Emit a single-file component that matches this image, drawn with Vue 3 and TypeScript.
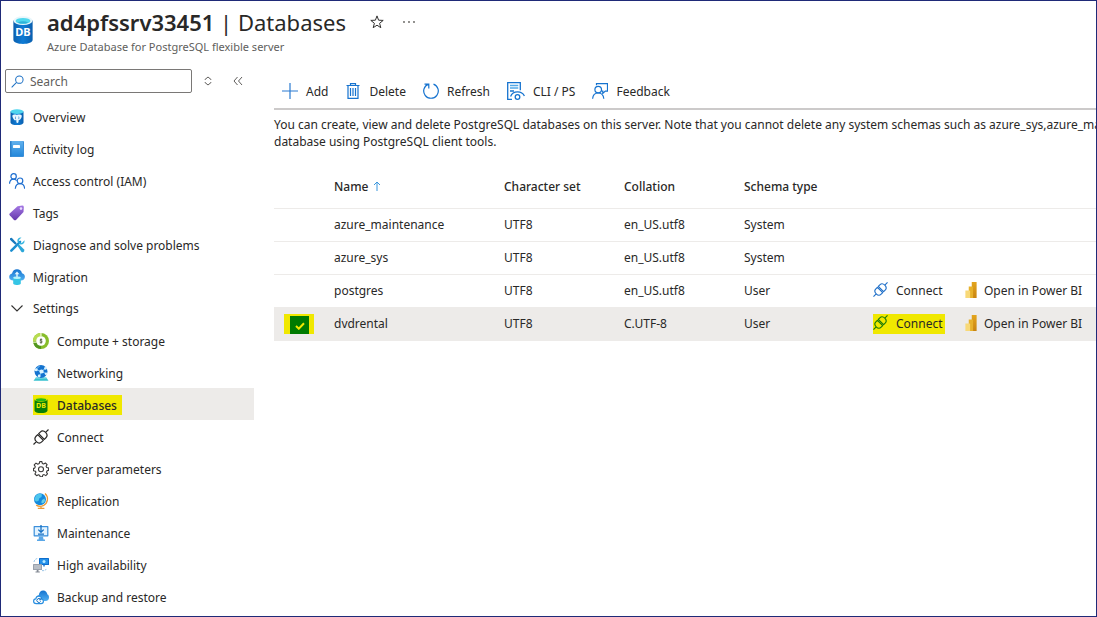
<script setup lang="ts">
import { ref } from 'vue'

interface NavItem {
  label: string
  icon: string
}

interface DatabaseRow {
  name: string
  charset: string
  collation: string
  schema: string
}

const icons: Record<string, string> = {
  database: `
    <path d="M1 2.4v11.2C1 15 4.1 16 8 16s7-1 7-2.400V2.400z" fill="url(#g-db)"/>
    <ellipse cx="8" cy="2.600" rx="7" ry="2.500" fill="#e8f6fb"/>
    <ellipse cx="8" cy="2.800" rx="5.400" ry="1.700" fill="#50d8ee"/>
    <path d="M4 3.800q4-1.600 8 0-4 1-8 0z" fill="#2fb2d8"/>`,
  postgres: `
    <path d="M1.500 2.600v10.800C1.500 15 4.500 16 8 16s6.500-1 6.500-2.600V2.600z" fill="url(#g-db)"/>
    <ellipse cx="8" cy="2.600" rx="6.500" ry="2.300" fill="#4fd5ee"/>
    <path d="M3.400 6.500c1-1.200 3-1 4.500-.600 1.600-.600 4.200-.600 4.800.700.4 1.400-.6 3.300-1.700 4.200l-1.300.2c-.2 1.600 0 3-1.300 3-1.200-.1-1-1.600-1.100-3-.600.4-1.500.5-2 0-.900-1-2.300-3.200-1.900-4.500z" fill="#e9f7ff"/>
    <path d="M6.600 7.600c-.3 1-.2 1.600 0 2.600M9.700 7.500c.4 1 .2 1.700 0 2.600" stroke="#1671c2" stroke-width=".6" fill="none"/>`,
  log: `
    <rect x="1" y="0" width="14" height="16" rx="1" fill="#3a8fd8"/>
    <rect x="2" y="0" width="12" height="15" rx=".8" fill="url(#g-log)"/>
    <rect x="1" y="0" width="1.500" height="16" rx=".7" fill="#2a7fca"/>
    <rect x="4" y="4" width="7" height="3" rx=".4" fill="#fff"/>`,
  people: `
    <g fill="none" stroke="#1f6fd0" stroke-width="1.200"><circle cx="4.600" cy="3.400" r="2.700"/><path d="M.5 10.800c.2-3 1.900-4.600 4.100-4.600 1.300 0 2.300.5 3 1.400"/><circle cx="11" cy="7.800" r="2.800"/><path d="M6.300 15.700c.3-3.200 2.200-5 4.700-5s4.400 1.800 4.700 5"/></g>`,
  tag: `
    <path d="M8.500 1.300 13.300.6q1.400 0 1.500 1.300l-.3 5.100-7.500 7.900q-1 .9-2 0L.7 10.300q-.8-1 0-1.900z" fill="url(#g-tag)"/>
    <circle cx="12" cy="3.600" r="1.300" fill="#e9dcff"/>`,
  tools: `
    <path d="m2.300 13.700 8.800-8.900" stroke="#1b8ed0" stroke-width="2.500" stroke-linecap="round"/>
    <path d="M15.500 3.300 12.800 6 10.200 5.600 9.900 3.100 12.500.5C9.900-.1 7.900 2 8.400 4.600l2.900 2.900c2.700.4 4.700-1.600 4.200-4.200z" fill="#38b6e0"/>
    <path d="M1 1.200 2.700.7l5.100 5.600-1.500 1.500L1 2.800z" fill="#1879bd"/>
    <path d="m8.300 8.500 1.500-1.300 5.100 5.100q1 1.500-.1 2.500t-2.500 0z" fill="#2ba6d8"/>`,
  migrate: `
    <path d="M4.300 11.500C1.800 11.500.2 10 .2 7.900c0-1.800 1.100-3.100 2.800-3.500C3.500 1.900 5.500.3 8 .3s4.500 1.500 5 3.900c1.800.3 2.900 1.700 2.900 3.500 0 2.100-1.600 3.800-3.900 3.800z" fill="url(#g-cloud)"/>
    <path d="M7.300 8V5.300H5.600L8 2.600l2.400 2.700H8.700V8z" fill="#e8f8ff"/>
    <path d="M4.200 8.700v5.900c0 1.900 7.600 1.900 7.600 0V8.700z" fill="#35c5e5"/><ellipse cx="8" cy="8.700" rx="3.800" ry="1.200" fill="#b8f3fb"/>`,
  compute: `
    <circle cx="8" cy="8" r="8" fill="#87bd2a"/><path d="M8 0a8 8 0 0 0-8 8h3.500A4.500 4.500 0 0 1 8 3.500z" fill="#b8dc50"/><path d="M.5 10A8 8 0 0 0 8 16v-3.400A4.600 4.600 0 0 1 3.700 10z" fill="#539620"/>
    <circle cx="8" cy="8" r="4.800" fill="#fff"/><path d="M9.300 6.800C8.700 6.100 7 6.200 7 7.100s2.200.7 2.200 1.800-1.700 1.100-2.500.3M8 5.500v5" stroke="#4d5c37" stroke-width=".9" fill="none"/><path d="M7.500 0h1v3.300h-1zM.1 8.700h3.300v.9H.2z" fill="#fff"/>`,
  network: `
    <path d="m.5 15.800 2.600-3.500h10l2.400 3.500z" fill="#36c1cf"/><path d="M3 12.300h10l.8 1.200H2.200z" fill="#91e2e7"/>
    <circle cx="8" cy="6.500" r="6.500" fill="#1473cf"/>
    <path d="M3 4.500 8.500 6.500 13 3M8.500 6.500 6 12M8.500 6.500l4.900 2.300M3 4.500 6.500 1" stroke="#83caff" stroke-width="1" fill="none"/>
    <g fill="#d9f2ff"><circle cx="8.500" cy="6.500" r="2.100"/><circle cx="3.200" cy="4.700" r="1.500"/><circle cx="12.500" cy="3.300" r="1.400"/><circle cx="6.200" cy="11" r="1.400"/><circle cx="13" cy="8.800" r="1.200"/></g>`,
  greenDb: `
    <path d="M1.500 2.600v10.800C1.500 15 4.500 16 8 16s6.500-1 6.500-2.600V2.600z" fill="#087e08"/>
    <ellipse cx="8" cy="2.500" rx="6.500" ry="2.200" fill="#dfe500"/><ellipse cx="8" cy="2.700" rx="5.200" ry="1.500" fill="#26b815"/>`,
  plug: `
    <g fill="none" stroke="currentColor" stroke-width="1.200" stroke-linejoin="round" transform="rotate(45 8 8)"><path d="M4 7.300V5Q4 1.500 8 1.500T12 5v2.300zM4 8.700V11q0 3.500 4 3.500t4-3.500V8.700zM8 1.500V-2.600M8 14.500v4.100"/></g>`,
  gear: `
    <g fill="none" stroke="#3b3a39" stroke-width="1.100" stroke-linejoin="round"><path d="m6.700.6-.5 2-1.400.6L3 2.100 1.200 3.900l1.100 1.800-.6 1.400-1.200.3v2.300l2 .5.4 1.100-1 1.700 1.700 1.700 1.800-1 1.200.5.5 1.500h2.300l.4-1.600 1.300-.5 1.700 1 1.700-1.700-1-1.700.6-1.400 1.400-.4V6.900L13.700 6.500l-.6-1.200 1-1.700-1.700-1.600-1.800 1-1.300-.5L8.900.6z"/><circle cx="8" cy="8.200" r="2.500"/></g>`,
  globe: `
    <circle cx="7" cy="6.300" r="6" fill="#168adc"/><path d="M3 2.500Q5.500-.2 9 1.500L8.500 4 6.300 5.200 5.500 8 3 8.500 1.200 6.500z" fill="#4dc5ed"/><path d="m9 7 2.500-1.500L12 8l-2 2.500-1.800-1z" fill="#65d0e9"/>
    <path d="M12 .6c4 3.600 2.900 9.400-1.300 11.800-2.600 1.400-5.400 1.100-7.500-.3M8 13.300V15M4.800 15.300h6.600" stroke="#ed9b36" stroke-width="1.300" fill="none"/>`,
  monitor: `
    <rect x=".6" y="1" width="14.800" height="10.500" rx=".7" fill="#3b8fdb"/><rect x="1.800" y="2.200" width="12.400" height="8" fill="#e2f3ff"/>
    <path d="M8 0v7M5.300 4.600 8 7.300l2.700-2.700M5 9.100h6" stroke="#1670c4" stroke-width="1.300" fill="none"/><path d="M6 11.500h4l.5 3h1.500V16H4v-1.500h1.500z" fill="#5aa7e7"/>`,
  availability: `
    <rect x="6" y="1" width="10" height="7" rx=".5" fill="#0d6dcc"/><rect x="7" y="2" width="8" height="5" fill="#2590e9"/><circle cx="11" cy="4.500" r="1.500" fill="#b4e8ff"/><path d="M10 8h2v1.600h-2z" fill="#579fe0"/>
    <rect x="0" y="7" width="9" height="6" rx=".5" fill="#9aa1ac"/><rect x="1" y="8" width="7" height="4" fill="#b8bec6"/><path d="M3.700 13h1.800v1.500h1.300v1H2.500v-1h1.200z" fill="#858b95"/><path d="M1 5Q1.500 2 4.500 1.500M9 13.600q4 .4 4.800-2.600" stroke="#7fb5df" stroke-width=".8" stroke-dasharray="2 1" fill="none"/>`,
  backup: `
    <path d="M6 12c-1.800 0-2.800-1-2.800-2.700S4.500 6.500 5.800 6.200C6.100 3.600 7.800 1.500 10.200 1.500s3.900 1.700 4.200 4.100C15.500 5.900 16 7 16 8.500c0 2-1.300 3.500-3.300 3.500z" fill="url(#g-cloud)"/>
    <path d="M3.300 14.600C1.500 14.600.6 13.500.6 12.200s1-2.300 2.200-2.400C3.200 8 4.500 7 6.300 7.200c1.600.3 2.500 1.500 2.500 2.900 1.100.3 1.600 1.100 1.600 2.100 0 1.300-.9 2.400-2.300 2.400z" fill="#fff" stroke="#2a8fe0" stroke-width="1.200"/><path d="M7.700 12.400a2 2 0 1 1-.1-2M7.900 8.900v1.900H6.100" stroke="#1471c5" stroke-width="1" fill="none"/>`,
  add: `<path d="M8 0v16M0 8h16" stroke="#2a7bd1" stroke-width="1.200"/>`,
  trash: `
    <g fill="none" stroke="#1673cf" stroke-width="1.200"><path d="M1.500 2.500h13M5.500 2.500V.7h5v1.800M3 2.500v12.800h10V2.500M5.500 5v8M8 5v8M10.500 5v8"/></g>`,
  refresh: `<path d="M10.500 1.100A7.300 7.300 0 1 1 5.500 1.100M1.500 1.200h4.300v4.200" fill="none" stroke="#1673cf" stroke-width="1.200"/>`,
  cli: `
    <g fill="none" stroke="#1673cf" stroke-width="1.300"><path d="M5 17.300H.7V.7h12.600v7.600"/><path d="M3 3.500h8.300M3 6h8.300" stroke="#54a9e8" stroke-width="1.500"/><path d="M3 9h4M3.600 14.400c2.400-6 11.200-6 13.800-.4"/><circle cx="10.500" cy="15" r="2.300"/></g>`,
  feedback: `
    <g fill="none" stroke="#1673cf" stroke-width="1.200"><circle cx="6.200" cy="6.600" r="3.300"/><path d="M.6 15.800c.3-3.500 2.700-5.800 5.600-5.800s5.300 2.300 5.600 5.800M4.500 2.300V.6h11v7.500h-2.200l-2.500 2.300V8.100h-1"/></g>`,
  powerbi: `
    <path d="M9 0h6q.5 0 .5.500V16H9z" fill="url(#g-bi)"/><path d="M5 4.500h5q.8 0 .8.800V16H5z" fill="#e7b12b"/><path d="M.5 8.500h5.600q.7 0 .7.700V16H.5z" fill="#f8d978"/>`,
  search: `<g fill="none" stroke="#1a6fc4" stroke-width="1.100"><circle cx="9" cy="5" r="4"/><path d="m6 8-5.300 5.300"/></g>`,
}

const topItems: NavItem[] = [
  { label: 'Overview', icon: 'postgres' },
  { label: 'Activity log', icon: 'log' },
  { label: 'Access control (IAM)', icon: 'people' },
  { label: 'Tags', icon: 'tag' },
  { label: 'Diagnose and solve problems', icon: 'tools' },
  { label: 'Migration', icon: 'migrate' },
]

const settingsItems: NavItem[] = [
  { label: 'Compute + storage', icon: 'compute' },
  { label: 'Networking', icon: 'network' },
  { label: 'Databases', icon: 'greenDb' },
  { label: 'Connect', icon: 'plug' },
  { label: 'Server parameters', icon: 'gear' },
  { label: 'Replication', icon: 'globe' },
  { label: 'Maintenance', icon: 'monitor' },
  { label: 'High availability', icon: 'availability' },
  { label: 'Backup and restore', icon: 'backup' },
]

const commands: NavItem[] = [
  { label: 'Add', icon: 'add' },
  { label: 'Delete', icon: 'trash' },
  { label: 'Refresh', icon: 'refresh' },
  { label: 'CLI / PS', icon: 'cli' },
  { label: 'Feedback', icon: 'feedback' },
]

const databases: DatabaseRow[] = [
  { name: 'azure_maintenance', charset: 'UTF8', collation: 'en_US.utf8', schema: 'System' },
  { name: 'azure_sys', charset: 'UTF8', collation: 'en_US.utf8', schema: 'System' },
  { name: 'postgres', charset: 'UTF8', collation: 'en_US.utf8', schema: 'User' },
  { name: 'dvdrental', charset: 'UTF8', collation: 'C.UTF-8', schema: 'User' },
]

const active = ref('Databases')
const expanded = ref(true)
const selected = ref<string[]>(['dvdrental'])
const query = ref('')
</script>

<template>
  <div class="blade">
    <svg class="defs" aria-hidden="true">
      <defs>
        <linearGradient id="g-db"><stop offset="0" stop-color="#0a5fae" /><stop offset=".5" stop-color="#0f7cd6" /><stop offset="1" stop-color="#0a5fae" /></linearGradient>
        <linearGradient id="g-log" x2="0" y2="1"><stop offset="0" stop-color="#62b1ed" /><stop offset="1" stop-color="#2488da" /></linearGradient>
        <linearGradient id="g-tag" x2="0" y2="1"><stop offset="0" stop-color="#a579e4" /><stop offset="1" stop-color="#6336ab" /></linearGradient>
        <linearGradient id="g-cloud" x2="0" y2="1"><stop offset="0" stop-color="#1473cf" /><stop offset="1" stop-color="#52b0f2" /></linearGradient>
        <linearGradient id="g-bi" x2="0" y2="1"><stop offset="0" stop-color="#e3a51d" /><stop offset="1" stop-color="#c98411" /></linearGradient>
      </defs>
    </svg>

    <header class="header">
      <span class="logo">
        <svg viewBox="0 0 16 16" preserveAspectRatio="none" v-html="icons.database" />
        <span class="logo-text">DB</span>
      </span>
      <div class="heading">
        <div class="title-row">
          <h1><strong>ad4pfssrv33451</strong> | Databases</h1>
          <button class="plain star" aria-label="Favorite">
            <svg viewBox="0 0 14 14"><path d="m7 .9 1.600 4.300 4.600.2-3.600 2.900 1.200 4.400L7 10.200l-3.800 2.500 1.200-4.400L.8 5.400l4.600-.2z" fill="none" stroke="#323130" stroke-width="1" /></svg>
          </button>
          <button class="plain more" aria-label="More">
            <svg viewBox="0 0 14 4" fill="#605e5c"><circle cx="2" cy="2" r=".9" /><circle cx="7" cy="2" r=".9" /><circle cx="12" cy="2" r=".9" /></svg>
          </button>
        </div>
        <p>Azure Database for PostgreSQL flexible server</p>
      </div>
    </header>

    <div class="body">
      <aside class="sidebar">
        <div class="search-row">
          <label class="search">
            <svg viewBox="0 0 14 14" v-html="icons.search" />
            <input v-model="query" type="text" placeholder="Search" aria-label="Search" />
          </label>
          <button class="plain sort" aria-label="Expand all">
            <svg viewBox="0 0 8 10"><path d="M1 4V3.500L4 1l3 2.500V4M1 6v.5L4 9l3-2.500V6" fill="none" stroke="#605e5c" /></svg>
          </button>
          <button class="plain collapse" aria-label="Collapse menu">
            <svg viewBox="0 0 10 10"><path d="M4.500 1 1 5l3.500 4M9 1 5.500 5 9 9" fill="none" stroke="#605e5c" /></svg>
          </button>
        </div>
        <nav>
          <a v-for="item in topItems" :key="item.label" href="#" class="nav-item" @click.prevent="active = item.label">
            <svg class="icon" viewBox="0 0 16 16" v-html="icons[item.icon]" />{{ item.label }}
          </a>
          <button class="nav-item group" :aria-expanded="expanded" @click="expanded = !expanded">
            <svg class="icon" viewBox="0 0 16 16"><path d="m2.500 5.500 5.500 5.500 5.500-5.500" fill="none" stroke="#323130" stroke-width="1.100" /></svg>Settings
          </button>
          <template v-if="expanded">
            <a
              v-for="item in settingsItems"
              :key="item.label"
              href="#"
              class="nav-item child"
              :class="{ active: active === item.label }"
              @click.prevent="active = item.label"
            >
              <span class="nav-label">
                <span class="icon-wrap">
                  <svg class="icon" viewBox="0 0 16 16" v-html="icons[item.icon]" />
                  <span v-if="item.icon === 'greenDb'" class="mini-text">DB</span>
                </span>{{ item.label }}
              </span>
            </a>
          </template>
        </nav>
      </aside>

      <main class="content">
        <div class="toolbar">
          <button v-for="command in commands" :key="command.label" class="plain command">
            <svg :class="['icon', command.icon]" :viewBox="command.icon === 'cli' ? '0 0 18 18' : '0 0 16 16'" v-html="icons[command.icon]" />{{ command.label }}
          </button>
        </div>
        <p class="note">
          You can create, view and delete PostgreSQL databases on this server. Note that you cannot delete any system schemas such as azure_sys,azure_maintenance<br />
          database using PostgreSQL client tools.
        </p>
        <table>
          <colgroup>
            <col class="c-check" /><col class="c-name" /><col class="c-mid" /><col class="c-mid" /><col class="c-schema" /><col class="c-connect" /><col />
          </colgroup>
          <thead>
            <tr>
              <th></th>
              <th>Name <svg class="arrow" viewBox="0 0 8 10"><path d="M4 10V1M1 4l3-3 3 3" fill="none" stroke="#3a96dd" /></svg></th>
              <th>Character set</th>
              <th>Collation</th>
              <th>Schema type</th>
              <th></th>
              <th></th>
            </tr>
          </thead>
          <tbody>
            <tr v-for="db in databases" :key="db.name" :class="{ selected: selected.includes(db.name) }">
              <td class="check-cell">
                <label v-if="selected.includes(db.name)" class="check">
                  <input v-model="selected" type="checkbox" :value="db.name" :aria-label="`Select ${db.name}`" />
                  <svg viewBox="0 0 10 8"><path d="m1 4 2.800 2.700L9 1.200" fill="none" stroke="#f0e800" stroke-width="2" /></svg>
                </label>
              </td>
              <td>{{ db.name }}</td>
              <td>{{ db.charset }}</td>
              <td>{{ db.collation }}</td>
              <td>{{ db.schema }}</td>
              <td>
                <button v-if="db.schema === 'User'" class="plain action connect">
                  <svg viewBox="0 0 16 16" v-html="icons.plug" />Connect
                </button>
              </td>
              <td>
                <button v-if="db.schema === 'User'" class="plain action power">
                  <svg viewBox="0 0 16 16" preserveAspectRatio="none" v-html="icons.powerbi" />Open in Power BI
                </button>
              </td>
            </tr>
          </tbody>
        </table>
      </main>
    </div>
  </div>
</template>

<style>
body {
  margin: 0;
}
</style>

<style scoped>
.blade {
  box-sizing: border-box;
  min-height: 100vh;
  border: 1px solid #1f2a78;
  background: #fff;
  color: #292827;
  font: 12px/17px 'Segoe UI', 'Noto Sans', sans-serif;
  overflow: hidden;
}
.defs {
  position: absolute;
  width: 0;
  height: 0;
}
svg {
  display: block;
  flex: none;
}
.plain {
  border: 0;
  padding: 0;
  background: none;
  color: inherit;
  font: inherit;
  white-space: nowrap;
}
.header {
  display: flex;
  align-items: flex-start;
  height: 68px;
  padding-left: 11px;
  box-sizing: border-box;
}
.logo {
  position: relative;
  width: 22px;
  margin: 15px 13px 0 0;
}
.logo svg {
  width: 22px;
  height: 28px;
}
.logo-text {
  position: absolute;
  inset: 9px 0 auto;
  color: #fff;
  font-size: 11px;
  font-weight: 700;
  line-height: 14px;
  text-align: center;
}
.title-row {
  display: flex;
  align-items: center;
  height: 36px;
  margin-top: 3px;
}
h1 {
  margin: 0;
  font-size: 22px;
  font-weight: 400;
  line-height: 36px;
  white-space: nowrap;
}
h1 strong {
  font-weight: 600;
}
.star {
  margin-left: 24px;
}
.star svg {
  width: 14px;
  height: 14px;
}
.more {
  margin-left: 18px;
}
.more svg {
  width: 14px;
  height: 4px;
}
.heading p {
  margin: 0;
  color: #605e5c;
  font-size: 11px;
  line-height: 13px;
}
.body {
  display: flex;
}
.sidebar {
  flex: none;
  width: 253px;
}
.search-row {
  display: flex;
  align-items: center;
  height: 24px;
  padding-left: 4px;
  margin-bottom: 7px;
}
.search {
  display: flex;
  align-items: center;
  box-sizing: border-box;
  width: 187px;
  height: 24px;
  padding-left: 5px;
  gap: 6px;
  border: 1px solid #7a7876;
  border-radius: 2px;
}
.search svg {
  width: 13px;
  height: 13px;
}
.search input {
  min-width: 0;
  flex: 1;
  border: 0;
  outline: 0;
  padding: 0;
  background: none;
  font: inherit;
}
.search input::placeholder {
  color: #605e5c;
}
.sort {
  margin-left: 12px;
}
.sort svg {
  width: 8px;
  height: 10px;
}
.collapse {
  margin-left: 21px;
}
.collapse svg {
  width: 10px;
  height: 10px;
}
.nav-item {
  display: flex;
  align-items: center;
  box-sizing: border-box;
  width: 100%;
  height: 32px;
  padding: 2px 0 0 8px;
  gap: 8px;
  border: 0;
  background: none;
  color: inherit;
  font: inherit;
  text-decoration: none;
}
.icon {
  width: 16px;
  height: 16px;
}
.group {
  padding-top: 0;
}
.child {
  padding-left: 32px;
}
.nav-label {
  display: flex;
  align-items: center;
  height: 20px;
  gap: 8px;
}
.icon-wrap {
  position: relative;
}
.mini-text {
  position: absolute;
  inset: 5px 0 auto;
  color: #f0e800;
  font-size: 7px;
  font-weight: 700;
  line-height: 8px;
  text-align: center;
}
.active {
  background: #edebe9;
  font-weight: 500;
}
.active .nav-label {
  padding-right: 5px;
  background: #f0e800;
}
.content {
  flex: 1;
  min-width: 0;
  padding-left: 20px;
  overflow: hidden;
}
.toolbar {
  display: flex;
  height: 41px;
  box-sizing: border-box;
  padding: 5px 0 0 8px;
  gap: 17px;
  border-bottom: 2px solid #cccaca;
}
.command {
  display: flex;
  align-items: center;
  height: 34px;
  gap: 8px;
}
.icon.cli {
  width: 18px;
  height: 18px;
}
.note {
  margin: 6px 0 0;
  white-space: nowrap;
}
table {
  width: 100%;
  margin-top: 15px;
  border-collapse: collapse;
  table-layout: fixed;
}
.c-check {
  width: 60px;
}
.c-name {
  width: 170px;
}
.c-mid {
  width: 120px;
}
.c-schema {
  width: 129px;
}
.c-connect {
  width: 92px;
}
th,
td {
  height: 33px;
  box-sizing: border-box;
  padding: 0;
  border-bottom: 1px solid #edebe9;
  text-align: left;
  white-space: nowrap;
}
th {
  height: 43px;
  font-weight: 500;
}
.arrow {
  display: inline-block;
  width: 8px;
  height: 10px;
  margin-left: 1px;
}
.selected td {
  background: #edebe9;
}
.check {
  position: relative;
  display: flex;
  width: 24px;
  height: 20px;
  margin-left: 10px;
  padding-left: 6px;
  background: #f0e800;
}
.check input {
  appearance: none;
  width: 19px;
  height: 18px;
  margin: 2px 0 0;
  background: #007a00;
}
.check svg {
  position: absolute;
  left: 11px;
  top: 8px;
  width: 10px;
  height: 8px;
}
.action {
  display: flex;
  align-items: center;
  height: 20px;
}
.connect {
  padding-right: 2px;
  gap: 8px;
}
.connect svg {
  width: 15px;
  height: 15px;
  margin-bottom: 3px;
  color: #1f6fc8;
}
.power svg {
  width: 12px;
  height: 16px;
  margin-bottom: 2px;
}
.power {
  gap: 7px;
}
.selected .connect {
  background: #f0e800;
}
.selected .connect svg {
  color: #1a7a08;
}
</style>
